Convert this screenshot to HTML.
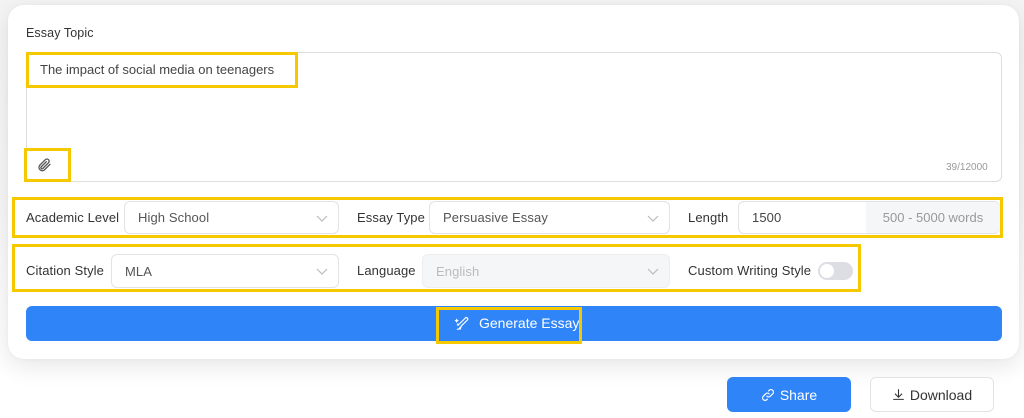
<!DOCTYPE html>
<html><head><meta charset="utf-8"><style>
*{box-sizing:border-box;margin:0;padding:0}
body{width:1024px;height:418px;background:linear-gradient(#f3f3f3 0,#f6f6f6 200px,#fff 380px);font-family:"Liberation Sans",sans-serif;position:relative;overflow:hidden;color:#333}
.card{position:absolute;left:8px;top:5px;width:1011px;height:354px;background:#fff;border-radius:16px;box-shadow:0 8px 24px rgba(0,0,0,.09),0 0 4px rgba(0,0,0,.04)}
.a{position:absolute}
.lbl{font-size:13px;color:#333;white-space:nowrap;letter-spacing:.1px}
.box{border:1px solid #e3e3e3;border-radius:6px;background:#fff}
.y{position:absolute;border:3px solid #f5c800}
.sel{font-size:13px;color:#555;padding-left:13px;display:flex;align-items:center;letter-spacing:.1px}
.chev{position:absolute;right:10px;top:50%;margin-top:-5px}
</style></head><body>
<div class="card"></div>
<div class="a lbl" style="left:26px;top:26px;font-size:12.5px">Essay Topic</div>
<div class="a box" style="left:26px;top:52px;width:976px;height:130px;border-color:#ddd"></div>
<div class="a" style="left:40px;top:62px;font-size:13px;color:#444">The impact of social media on teenagers</div>
<div class="y" style="left:26px;top:52px;width:272px;height:36px"></div>
<svg class="a" style="left:36px;top:157px" width="16" height="16" viewBox="0 0 24 24" fill="none" stroke="#555" stroke-width="2" stroke-linecap="round"><path d="M21 11l-8.5 8.5a5 5 0 0 1-7-7L14 4a3.3 3.3 0 0 1 4.7 4.7L10.2 17.2a1.7 1.7 0 0 1-2.4-2.4L15.5 7"/></svg>
<div class="y" style="left:24px;top:148px;width:47px;height:34px"></div>
<div class="a" style="left:946px;top:162px;font-size:10px;color:#999">39/12000</div>

<div class="a lbl" style="left:26px;top:210px">Academic Level</div>
<div class="a box sel" style="left:124px;top:201px;width:215px;height:33px">High School<svg class="chev" width="12" height="10" viewBox="0 0 12 10"><path d="M1 3l5 5 5-5" fill="none" stroke="#bbb" stroke-width="1.2"/></svg></div>
<div class="a lbl" style="left:357px;top:210px">Essay Type</div>
<div class="a box sel" style="left:429px;top:201px;width:241px;height:33px">Persuasive Essay<svg class="chev" width="12" height="10" viewBox="0 0 12 10"><path d="M1 3l5 5 5-5" fill="none" stroke="#bbb" stroke-width="1.2"/></svg></div>
<div class="a lbl" style="left:688px;top:210px">Length</div>
<div class="a box sel" style="left:738px;top:201px;width:262px;height:33px;color:#444">1500</div>
<div class="a" style="left:866px;top:202px;width:134px;height:31px;background:#f5f6f7;font-size:13px;color:#999;display:flex;align-items:center;justify-content:center;border-radius:0 6px 6px 0">500 - 5000 words</div>
<div class="y" style="left:12px;top:197px;width:991px;height:41px"></div>

<div class="a lbl" style="left:26px;top:263px">Citation Style</div>
<div class="a box sel" style="left:111px;top:254px;width:228px;height:34px">MLA<svg class="chev" width="12" height="10" viewBox="0 0 12 10"><path d="M1 3l5 5 5-5" fill="none" stroke="#bbb" stroke-width="1.2"/></svg></div>
<div class="a lbl" style="left:357px;top:263px">Language</div>
<div class="a box sel" style="left:422px;top:254px;width:248px;height:34px;background:#f5f6f8;color:#bbb;border-color:#eee">English<svg class="chev" width="12" height="10" viewBox="0 0 12 10"><path d="M1 3l5 5 5-5" fill="none" stroke="#bbb" stroke-width="1.2"/></svg></div>
<div class="a lbl" style="left:688px;top:263px">Custom Writing Style</div>
<div class="a" style="left:818px;top:262px;width:35px;height:18px;border-radius:9px;background:#dcdee3"><div style="position:absolute;left:2px;top:2px;width:14px;height:14px;border-radius:50%;background:#fff"></div></div>
<div class="y" style="left:12px;top:244px;width:849px;height:48px"></div>

<div class="a" style="left:26px;top:306px;width:976px;height:35px;background:#2f84f8;border-radius:6px"></div>
<svg class="a" style="left:454px;top:316px" width="16" height="16" viewBox="0 0 24 24" fill="none" stroke="#fff" stroke-width="1.8" stroke-linecap="round"><path d="M9 20l2-5L20 6a2 2 0 0 0-3-3l-9 9M5 20c2 0 3-1 4-3"/><path d="M4 5v4M2 7h4M6 12v2M5 13h2"/></svg>
<div class="a" style="left:479px;top:315px;font-size:14px;color:#fff">Generate Essay</div>
<div class="y" style="left:436px;top:307px;width:146px;height:37px"></div>

<div class="a" style="left:727px;top:377px;width:124px;height:35px;background:#2f84f8;border-radius:6px;color:#fff;font-size:14px;display:flex;align-items:center;justify-content:center;gap:5px"><svg width="14" height="14" viewBox="0 0 24 24" fill="none" stroke="#fff" stroke-width="2" stroke-linecap="round"><path d="M10 14a4 4 0 0 0 6 0l4-4a4 4 0 0 0-6-6l-1 1M14 10a4 4 0 0 0-6 0l-4 4a4 4 0 0 0 6 6l1-1"/></svg>Share</div>
<div class="a" style="left:870px;top:377px;width:124px;height:35px;background:#fff;border:1px solid #e3e3e3;border-radius:6px;color:#333;font-size:14px;display:flex;align-items:center;justify-content:center;gap:5px"><svg width="13" height="13" viewBox="0 0 24 24" fill="none" stroke="#333" stroke-width="2" stroke-linecap="round"><path d="M12 3v13M6 11l6 6 6-6M3 21h18"/></svg>Download</div>
</body></html>
